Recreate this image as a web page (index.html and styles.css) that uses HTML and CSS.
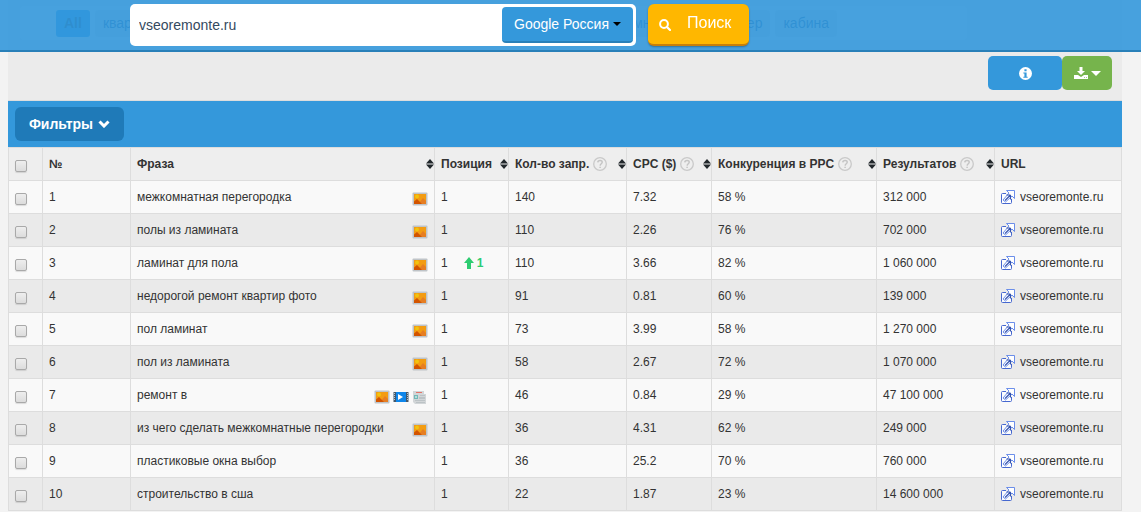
FILE: index.html
```html
<!DOCTYPE html>
<html lang="ru">
<head>
<meta charset="utf-8">
<title>vseoremonte.ru</title>
<link rel="stylesheet" href="styles.css">
</head>
<body>
<svg class="sprite" aria-hidden="true">
  <symbol id="i-photo" viewBox="0 0 16 14">
    <rect x="0.5" y="0.5" width="15" height="13" rx="1" fill="#bfc4c8"/>
    <rect x="2" y="2" width="12" height="10" fill="#f39c12"/>
    <circle cx="5" cy="4.500" r="2" fill="#f1c40f"/>
    <path d="M6 12l5-6 3 3v3z" fill="#e67e22"/>
    <path d="M2 12V9.500l3-2.500 5 5z" fill="#d35400"/>
  </symbol>
  <symbol id="i-video" viewBox="0 0 16 14">
    <path d="M0.500 2h15v10h-15z" fill="#44586b"/>
    <path d="M3 2h10v10H3z" fill="#0e86ea"/>
    <path d="M1 3h1v1H1zM1 5h1v1H1zM1 7h1v1H1zM1 9h1v1H1zM14 3h1v1h-1zM14 5h1v1h-1zM14 7h1v1h-1zM14 9h1v1h-1z" fill="#b5c4d0"/>
    <path d="M5 4l5 3-5 3z" fill="#fff"/>
  </symbol>
  <symbol id="i-news" viewBox="0 0 16 14">
    <path d="M1 1h11v3h2v10H3l-2-2z" fill="#d2d6d8"/>
    <path d="M4 2h6v1H4z" fill="#e57368"/>
    <path d="M2 5h4v4H2z" fill="#71b9b7"/>
    <path d="M3.500 6h1v2h-1z" fill="#fff"/>
    <path d="M8 5h5v1H8zM7 7h6v2H7zM3 10h10v1H3zM4 12h9v1H4z" fill="#bcc3c6"/>
  </symbol>
  <symbol id="i-help" viewBox="0 0 14 14">
    <circle cx="7" cy="7" r="6.300" fill="none" stroke="#c9c9c9" stroke-width="1.300"/>
    <path d="M4.800 5.400C4.900 2.800 9.300 2.900 9.200 5.300 9.100 6.700 7.200 6.800 7.100 8.600M7.100 9.800v1.300" fill="none" stroke="#c4c4c4" stroke-width="1.500"/>
  </symbol>
  <symbol id="i-sort" viewBox="0 0 8 10">
    <path d="M4 0l4 4.500H0zM4 10l4-4.500H0z" fill="#22282c"/>
  </symbol>
  <symbol id="i-link" viewBox="0 0 14 14">
    <path d="M5 3.500H1.500a1 1 0 0 0-1 1v8a1 1 0 0 0 1 1h8a1 1 0 0 0 1-1V9" fill="#fff" fill-opacity=".8" stroke="#4668d0"/>
    <path d="M5.500.5h8v8L11 6l-6.500 6-2.500-2L8 3z" fill="#fff" stroke="#5b82e8" stroke-width=".9"/>
    <path d="M4 10.500l5.500-5.500M9.500 5H5.500M9.500 5v4.500" fill="none" stroke="#3553ae" stroke-width="1.100"/>
  </symbol>
  <symbol id="i-up" viewBox="0 0 10 12">
    <path d="M5 0l5 6H7v6H3V6H0z" fill="#2ecc71"/>
  </symbol>
  <symbol id="i-search" viewBox="0 0 12 12">
    <circle cx="5" cy="5" r="3.900" fill="none" stroke="#fff" stroke-width="2"/>
    <path d="M8 8l3 3" stroke="#fff" stroke-width="2.200" stroke-linecap="round"/>
  </symbol>
  <symbol id="i-info" viewBox="0 0 12 12">
    <circle cx="6" cy="6" r="6" fill="#fff"/>
    <path d="M5 2h2v2H5zM4 5h3v4h1v1H4V9h1V6H4z" fill="#3498db"/>
  </symbol>
  <symbol id="i-download" viewBox="0 0 14 12">
    <path d="M5.500 0h3v4H11L7 8 3 4h2.500z" fill="#fff"/>
    <path d="M0 8h4l3 2 3-2h4v4H0z" fill="#fff"/>
    <path d="M10 10h1v1h-1zM12 10h1v1h-1z" fill="#a9d08e"/>
  </symbol>
  <symbol id="i-caret" viewBox="0 0 8 4">
    <path d="M0 0h8L4 4z" fill="currentColor"/>
  </symbol>
  <symbol id="i-chevron" viewBox="0 0 12 8">
    <path d="M1.500 1.500L6 6l4.500-4.500" fill="none" stroke="#fff" stroke-width="3"/>
  </symbol>
</svg>

<header class="topbar">
  <form class="search">
    <div class="search-box">
      <input class="search-input" type="text" value="vseoremonte.ru" aria-label="Домен">
      <button class="engine" type="button">Google Россия <svg class="caret"><use href="#i-caret"/></svg></button>
    </div>
    <button class="search-btn" type="button"><svg class="icon-search"><use href="#i-search"/></svg>Поиск</button>
  </form>
</header>

<main class="content">
  <nav class="tags">
    <a class="tag tag-active" href="#">All</a>
    <a class="tag tag-wide" href="#">квар</a>
    <a class="tag tag-mid" href="#">мн</a>
    <a class="tag tag-end" href="#">ер</a>
    <a class="tag" href="#">кабина</a>
  </nav>
  <div class="toolbar">
    <button class="btn btn-info" type="button" aria-label="Информация"><svg class="icon-info"><use href="#i-info"/></svg></button>
    <button class="btn btn-export" type="button" aria-label="Экспорт"><svg class="icon-download"><use href="#i-download"/></svg><svg class="caret-lg"><use href="#i-caret"/></svg></button>
  </div>
  <div class="filterbar">
    <button class="filter-btn" type="button">Фильтры <svg class="icon-chevron"><use href="#i-chevron"/></svg></button>
  </div>
  <table class="report">
    <colgroup>
      <col class="c-check"><col class="c-num"><col><col class="c-pos"><col class="c-vol"><col class="c-cpc"><col class="c-comp"><col class="c-res"><col class="c-url">
    </colgroup>
    <thead>
      <tr>
        <th><input class="check" type="checkbox" aria-label="Выбрать все"></th>
        <th>№</th>
        <th><div class="head"><span>Фраза</span><svg class="sort"><use href="#i-sort"/></svg></div></th>
        <th><div class="head"><span>Позиция</span><svg class="sort"><use href="#i-sort"/></svg></div></th>
        <th><div class="head"><span>Кол-во запр.</span><svg class="help"><use href="#i-help"/></svg><svg class="sort"><use href="#i-sort"/></svg></div></th>
        <th><div class="head"><span>CPC ($)</span><svg class="help"><use href="#i-help"/></svg><svg class="sort"><use href="#i-sort"/></svg></div></th>
        <th><div class="head"><span>Конкуренция в PPC</span><svg class="help"><use href="#i-help"/></svg><svg class="sort"><use href="#i-sort"/></svg></div></th>
        <th><div class="head"><span>Результатов</span><svg class="help"><use href="#i-help"/></svg><svg class="sort"><use href="#i-sort"/></svg></div></th>
        <th>URL</th>
      </tr>
    </thead>
    <tbody>
      <tr>
        <td><input class="check" type="checkbox" aria-label="Строка 1"></td><td>1</td>
        <td><div class="phrase"><span>межкомнатная перегородка</span><span class="marks"><svg class="mark"><use href="#i-photo"/></svg></span></div></td>
        <td>1</td><td>140</td><td>7.32</td><td>58 %</td><td>312 000</td>
        <td><a class="url" href="#"><svg class="icon-link"><use href="#i-link"/></svg>vseoremonte.ru</a></td>
      </tr>
      <tr>
        <td><input class="check" type="checkbox" aria-label="Строка 2"></td><td>2</td>
        <td><div class="phrase"><span>полы из ламината</span><span class="marks"><svg class="mark"><use href="#i-photo"/></svg></span></div></td>
        <td>1</td><td>110</td><td>2.26</td><td>76 %</td><td>702 000</td>
        <td><a class="url" href="#"><svg class="icon-link"><use href="#i-link"/></svg>vseoremonte.ru</a></td>
      </tr>
      <tr>
        <td><input class="check" type="checkbox" aria-label="Строка 3"></td><td>3</td>
        <td><div class="phrase"><span>ламинат для пола</span><span class="marks"><svg class="mark"><use href="#i-photo"/></svg></span></div></td>
        <td><div class="position"><span>1</span><span class="delta"><svg class="icon-up"><use href="#i-up"/></svg>1</span></div></td><td>110</td><td>3.66</td><td>82 %</td><td>1 060 000</td>
        <td><a class="url" href="#"><svg class="icon-link"><use href="#i-link"/></svg>vseoremonte.ru</a></td>
      </tr>
      <tr>
        <td><input class="check" type="checkbox" aria-label="Строка 4"></td><td>4</td>
        <td><div class="phrase"><span>недорогой ремонт квартир фото</span><span class="marks"><svg class="mark"><use href="#i-photo"/></svg></span></div></td>
        <td>1</td><td>91</td><td>0.81</td><td>60 %</td><td>139 000</td>
        <td><a class="url" href="#"><svg class="icon-link"><use href="#i-link"/></svg>vseoremonte.ru</a></td>
      </tr>
      <tr>
        <td><input class="check" type="checkbox" aria-label="Строка 5"></td><td>5</td>
        <td><div class="phrase"><span>пол ламинат</span><span class="marks"><svg class="mark"><use href="#i-photo"/></svg></span></div></td>
        <td>1</td><td>73</td><td>3.99</td><td>58 %</td><td>1 270 000</td>
        <td><a class="url" href="#"><svg class="icon-link"><use href="#i-link"/></svg>vseoremonte.ru</a></td>
      </tr>
      <tr>
        <td><input class="check" type="checkbox" aria-label="Строка 6"></td><td>6</td>
        <td><div class="phrase"><span>пол из ламината</span><span class="marks"><svg class="mark"><use href="#i-photo"/></svg></span></div></td>
        <td>1</td><td>58</td><td>2.67</td><td>72 %</td><td>1 070 000</td>
        <td><a class="url" href="#"><svg class="icon-link"><use href="#i-link"/></svg>vseoremonte.ru</a></td>
      </tr>
      <tr>
        <td><input class="check" type="checkbox" aria-label="Строка 7"></td><td>7</td>
        <td><div class="phrase"><span>ремонт в</span><span class="marks"><svg class="mark"><use href="#i-photo"/></svg><svg class="mark"><use href="#i-video"/></svg><svg class="mark"><use href="#i-news"/></svg></span></div></td>
        <td>1</td><td>46</td><td>0.84</td><td>29 %</td><td>47 100 000</td>
        <td><a class="url" href="#"><svg class="icon-link"><use href="#i-link"/></svg>vseoremonte.ru</a></td>
      </tr>
      <tr>
        <td><input class="check" type="checkbox" aria-label="Строка 8"></td><td>8</td>
        <td><div class="phrase"><span>из чего сделать межкомнатные перегородки</span><span class="marks"><svg class="mark"><use href="#i-photo"/></svg></span></div></td>
        <td>1</td><td>36</td><td>4.31</td><td>62 %</td><td>249 000</td>
        <td><a class="url" href="#"><svg class="icon-link"><use href="#i-link"/></svg>vseoremonte.ru</a></td>
      </tr>
      <tr>
        <td><input class="check" type="checkbox" aria-label="Строка 9"></td><td>9</td>
        <td>пластиковые окна выбор</td>
        <td>1</td><td>36</td><td>25.2</td><td>70 %</td><td>760 000</td>
        <td><a class="url" href="#"><svg class="icon-link"><use href="#i-link"/></svg>vseoremonte.ru</a></td>
      </tr>
      <tr>
        <td><input class="check" type="checkbox" aria-label="Строка 10"></td><td>10</td>
        <td>строительство в сша</td>
        <td>1</td><td>22</td><td>1.87</td><td>23 %</td><td>14 600 000</td>
        <td><a class="url" href="#"><svg class="icon-link"><use href="#i-link"/></svg>vseoremonte.ru</a></td>
      </tr>
    </tbody>
  </table>
</main>
</body>
</html>
```
FILE: styles.css
```css
* { box-sizing: border-box; }

body {
  margin: 0;
  background: #f3f3f3;
  color: #333;
  font: 12px/16px "Liberation Sans", Arial, sans-serif;
}

button, input { font-family: inherit; margin: 0; }
button { border: 0; padding: 0; cursor: pointer; }
svg { display: block; flex: none; }
.sprite { position: absolute; width: 0; height: 0; }

/* Fixed search header */
.topbar {
  position: fixed;
  z-index: 2;
  top: 0;
  left: 0;
  right: 0;
  padding: 4px 0 4px 130px;
  background: rgba(52, 152, 219, .9);
  border-bottom: 2px solid #2980b9;
}
.search { display: flex; gap: 12px; }
.search-box {
  display: flex;
  flex: 0 1 506px;
  height: 42px;
  padding: 3px;
  background: #fff;
  border-radius: 5px;
}
.search-input {
  flex: 1;
  min-width: 0;
  padding: 0 6px;
  border: 0;
  background: transparent;
  color: #34495e;
  font-size: 14px;
  outline: 0;
}
.engine {
  display: flex;
  align-items: center;
  justify-content: center;
  gap: 4px;
  width: 131px;
  background: #3498db;
  border-bottom: 2px solid #2980b9;
  border-radius: 4px;
  color: #fff;
  font-size: 14px;
}
.engine .caret { color: #000; }
.caret { width: 8px; height: 4px; }
.search-btn {
  display: flex;
  align-items: center;
  gap: 16px;
  width: 101px;
  height: 42px;
  padding: 0 0 2px 11px;
  background: #ffb700;
  border-bottom: 2px solid #c87f0a;
  border-radius: 6px;
  box-shadow: 0 1px 2px rgba(0, 0, 0, .3);
  color: #fff;
  font-size: 16px;
}
.icon-search { width: 12px; height: 12px; margin-top: 4px; }

/* Page content */
.content {
  margin: 0 19px 0 8px;
  padding-top: 6px;
  background: #ebebeb;
}
.tags {
  display: flex;
  gap: 5px;
  max-width: 947px;
  margin-left: 12px;
  padding: 4px 130px 3px 36px;
  background: #f6f6f6;
  border-radius: 5px;
}
.tag {
  padding: 0 8px;
  background: #e2e2e2;
  border-radius: 3px;
  color: #10508a;
  font-size: 14px;
  line-height: 27px;
  text-decoration: none;
}
.tag-active { background: #1a93e6; color: #003050; font-weight: bold; }
.tag-wide { flex: 1; }
.tag-mid { width: 63px; text-align: center; }
.tag-end { width: 92px; text-align: right; }

.toolbar {
  display: flex;
  justify-content: flex-end;
  padding: 16px 10px 10px;
  border-bottom: 1px solid #ddd;
}
.btn {
  display: flex;
  align-items: center;
  justify-content: center;
  gap: 3px;
  height: 34px;
  border-radius: 5px;
  color: #fff;
}
.btn-info { width: 74px; background: #3498db; }
.btn-export { width: 50px; background: #76b44c; }
.icon-info { width: 13px; height: 13px; }
.icon-download { width: 14px; height: 12px; }
.caret-lg { width: 10px; height: 5px; }

.filterbar { padding: 6px 7px; background: #3498db; }
.filter-btn {
  display: flex;
  align-items: center;
  justify-content: center;
  gap: 5px;
  width: 109px;
  height: 34px;
  background: #1f7ab8;
  border-radius: 6px;
  color: #fff;
  font-size: 14px;
  font-weight: bold;
}
.icon-chevron { width: 12px; height: 8px; }

/* Keyword report */
.report {
  width: 100%;
  table-layout: fixed;
  border-collapse: collapse;
}
.c-check { width: 34px; }
.c-num { width: 88px; }
.c-pos { width: 74px; }
.c-vol { width: 118px; }
.c-cpc { width: 85px; }
.c-comp { width: 165px; }
.c-res { width: 118px; }
.c-url { width: 127px; }

th, td {
  height: 33px;
  padding: 0 6px;
  border: 1px solid #ddd;
  text-align: left;
  white-space: nowrap;
}
th { background: #eee; }
td { background: #f9f9f9; }
tbody tr:nth-child(even) td { background: #eaeaea; }

.check {
  appearance: none;
  display: block;
  width: 12px;
  height: 12px;
  margin-top: 4px;
  background: linear-gradient(#eee, #dcdcdc);
  border: 1px solid #a9a9a9;
  border-radius: 2px;
  box-shadow: 0 1px 1px rgba(0, 0, 0, .12);
}
.head { display: flex; align-items: center; gap: 4px; margin-right: -6px; }
.help { width: 14px; height: 14px; }
.sort { width: 8px; height: 10px; margin-left: auto; }
.phrase { display: flex; align-items: center; justify-content: space-between; }
.marks { display: flex; gap: 3px; margin-top: 3px; }
.mark { width: 16px; height: 14px; }
.position { display: flex; gap: 16px; }
.delta { display: flex; align-items: center; gap: 3px; color: #2ecc71; font-weight: bold; }
.icon-up { width: 10px; height: 12px; }
.url { display: flex; align-items: center; gap: 5px; color: #333; text-decoration: none; }
.icon-link { width: 14px; height: 14px; }
```
